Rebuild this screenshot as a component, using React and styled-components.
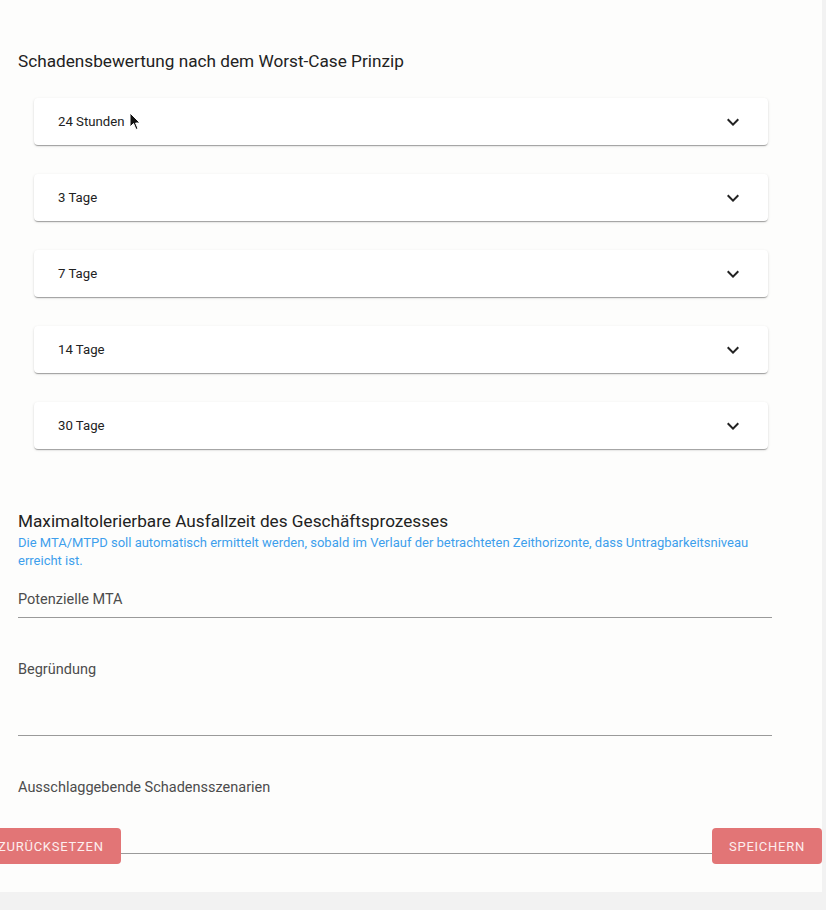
import React from "react";
import styled, { createGlobalStyle } from "styled-components";

const Global = createGlobalStyle`
  html, body {
    margin: 0;
    padding: 0;
    background: #f2f2f2;
    font-family: Roboto, "Noto Sans", "Liberation Sans", sans-serif;
  }
  * { box-sizing: border-box; }
`;

const Panel = styled.div`
  position: relative;
  width: 822px;
  height: 892px;
  background: #fdfdfc;
  padding: 49px 0 0 18px;
  overflow: hidden;
`;

const SectionTitle = styled.h2`
  margin: 0;
  font-size: 17.2px;
  line-height: 24px;
  font-weight: 400;
  color: #222;
`;

const AccordionList = styled.div`
  display: flex;
  flex-direction: column;
  gap: 29px;
  margin: 25px 54px 0 16px;
`;

const Card = styled.div`
  height: 47px;
  background: #fff;
  border-radius: 4px;
  box-shadow: 0 2px 1px -1px rgba(0, 0, 0, 0.2), 0 1px 1px 0 rgba(0, 0, 0, 0.14),
    0 1px 3px 0 rgba(0, 0, 0, 0.12);
  display: flex;
  align-items: center;
  justify-content: space-between;
  padding: 0 23px 0 24px;
  font-size: 13.2px;
  color: #222;
`;

const Chevron = styled.svg`
  width: 24px;
  height: 24px;
  fill: #222;
`;

const MtaBlock = styled.div`
  margin-top: 60px;
  width: 754px;
`;

const Hint = styled.p`
  margin: 1px 0 0;
  font-size: 13px;
  line-height: 18px;
  color: #3d9fec;
`;

const Field = styled.div`
  margin-top: ${(p) => p.$top}px;
  border-bottom: 1px solid #9a9a9a;
  padding-bottom: ${(p) => p.$space}px;
`;

const Label = styled.div`
  font-size: 14.5px;
  line-height: 18px;
  color: #4c4c4c;
`;

const ButtonRow = styled.div`
  display: flex;
  justify-content: space-between;
  margin: -26px 0 0 -37px;
  width: 841px;
`;

const Button = styled.button`
  height: 36px;
  padding: 0 17px;
  border: none;
  border-radius: 4px;
  background: #e27576;
  color: #fdeeee;
  font-family: Roboto, "Noto Sans", "Liberation Sans", sans-serif;
  font-size: 13px;
  font-weight: 400;
  letter-spacing: 0.75px;
  text-transform: uppercase;
  cursor: pointer;
`;

const Pointer = styled.svg`
  position: absolute;
  left: 129px;
  top: 112px;
  width: 12px;
  height: 19px;
`;

const horizons = ["24 Stunden", "3 Tage", "7 Tage", "14 Tage", "30 Tage"];

export default function App() {
  return (
    <>
      <Global />
      <Panel>
        <SectionTitle>Schadensbewertung nach dem Worst-Case Prinzip</SectionTitle>
        <AccordionList>
          {horizons.map((h) => (
            <Card key={h}>
              <span>{h}</span>
              <Chevron viewBox="0 0 24 24">
                <path d="M16.59 8.59 12 13.17 7.41 8.59 6 10l6 6 6-6z" />
              </Chevron>
            </Card>
          ))}
        </AccordionList>

        <MtaBlock>
          <SectionTitle>Maximaltolerierbare Ausfallzeit des Geschäftsprozesses</SectionTitle>
          <Hint>
            Die MTA/MTPD soll automatisch ermittelt werden, sobald im Verlauf der betrachteten
            Zeithorizonte, dass Untragbarkeitsniveau erreicht ist.
          </Hint>
          <Field $top={21} $space={8}>
            <Label>Potenzielle MTA</Label>
          </Field>
          <Field $top={43} $space={56}>
            <Label>Begründung</Label>
          </Field>
          <Field $top={43} $space={56}>
            <Label>Ausschlaggebende Schadensszenarien</Label>
          </Field>
          <ButtonRow>
            <Button>Zurücksetzen</Button>
            <Button>Speichern</Button>
          </ButtonRow>
        </MtaBlock>

        <Pointer viewBox="0 0 12 19">
          <path d="M1 1 L1 15 L4.5 11.5 L7 17.5 L9 16.6 L6.6 11 L11 11 Z" fill="#111" stroke="#fff" strokeWidth="1" />
        </Pointer>
      </Panel>
    </>
  );
}
